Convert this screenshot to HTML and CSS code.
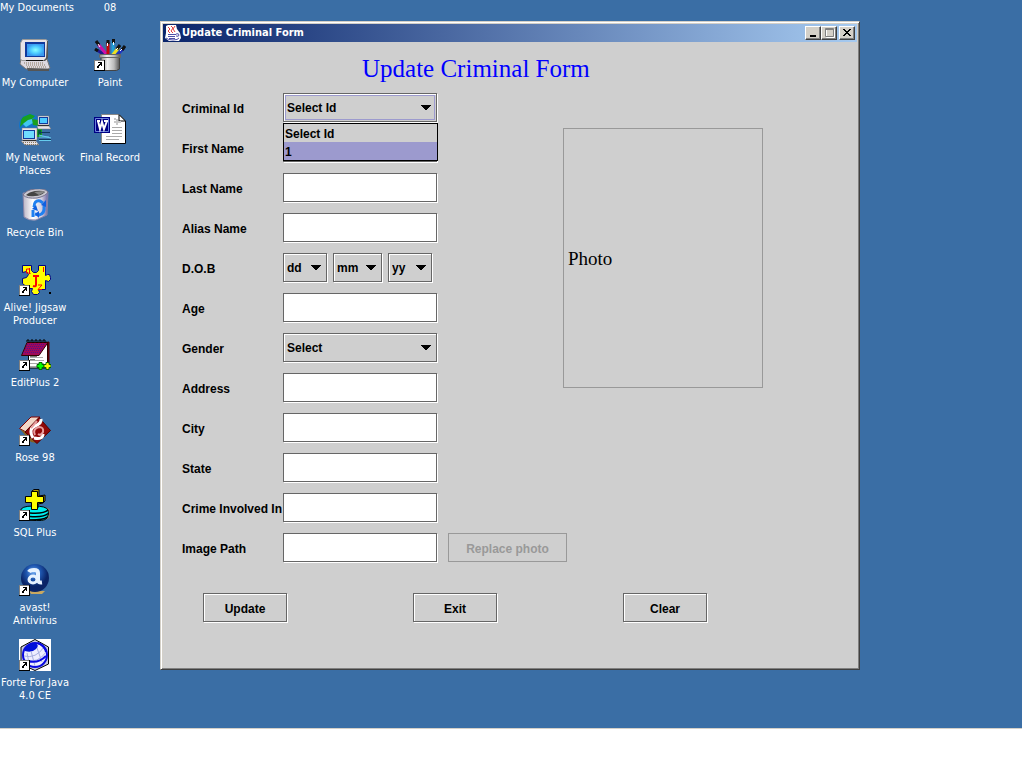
FILE: index.html
```html
<!DOCTYPE html>
<html lang="en">
<head>
<meta charset="utf-8">
<title>Update Criminal Form</title>
<link rel="stylesheet" href="styles.css">
</head>
<body>
<svg class="defs" aria-hidden="true">
  <defs>
    <symbol id="shortcut" viewBox="0 0 11 11">
      <path fill="#000" d="M0 0h11v11H0z"/><path fill="#fff" d="M0 0h10v10H0z"/><path fill="#808080" d="M0 0h10v1H1v9H0z"/>
      <path fill="#000" d="M4 2h4v4H7V5H6v1H5v2H3V6h1V5h1V4h1V3H4z"/>
    </symbol>
    <linearGradient id="metal"><stop offset="0" stop-color="#888"/><stop offset=".35" stop-color="#eee"/><stop offset=".7" stop-color="#bbb"/><stop offset="1" stop-color="#555"/></linearGradient>
    <linearGradient id="bin"><stop offset="0" stop-color="#b9b4c4"/><stop offset=".4" stop-color="#fff"/><stop offset=".75" stop-color="#d0cde0"/><stop offset="1" stop-color="#6a63a0"/></linearGradient>
    <radialGradient id="screen"><stop offset="0" stop-color="#8ff"/><stop offset=".6" stop-color="#4ccaff"/><stop offset="1" stop-color="#3a9af0"/></radialGradient>
    <radialGradient id="ball" cx=".45" cy=".3"><stop offset="0" stop-color="#6fa8f0"/><stop offset=".5" stop-color="#1f57b0"/><stop offset="1" stop-color="#0a2466"/></radialGradient>
    <symbol id="pc" viewBox="0 0 32 32">
      <path fill="#dcd8e0" stroke="#777" d="M2 20l-1 5 6 5h22l2-1-3-9z"/>
      <path fill="#555" d="M8 29l22 1v2H9z"/>
      <path stroke="#8a7a60" stroke-dasharray="1 1" d="M5 24h20M7 26h20M8 28h20"/>
      <path fill="#e8e4e8" stroke="#999" d="M3.500.5h23l2 1v17l-3 3h-23l-1-2V4z"/>
      <path fill="#555" d="M28 2h1v17l-3 3h-2l3-3z"/>
      <path fill="#123a9c" d="M6 3h20v15H6z"/><path fill="url(#screen)" d="M8 5h17v12H8z"/>
      <path fill="#111" d="M7 21h17v1H7z"/>
    </symbol>
  </defs>
</svg>
<main class="desktop">
  <nav class="icons" aria-label="Desktop">
    <div class="column">
      <button class="shortcut">My Documents</button>
      <button class="shortcut"><svg class="icon" aria-hidden="true"><use href="#pc"/></svg>My Computer</button>
      <button class="shortcut">
        <svg class="icon" viewBox="0 0 32 32" aria-hidden="true">
          <circle cx="11" cy="11" r="11" fill="#1474c8"/><path fill="#42c8f0" d="M5 3l8-1 1 7-7 4-4-4z"/>
          <path fill="#18a020" d="M4 3l7-3 5 2-3 3-4 1-4 3-4 4 1-7zM15 15h8v8h-6zM13 5l6 1 1 6-6-1z"/><path fill="#063" d="M19 16h3v5h-3z"/>
          <path stroke="#123a60" d="M20 18.500h11M20 25.500h12"/><path stroke="#6ce" d="M20 21l12 3M20 23h10M20 26.500h12"/>
          <path fill="#e8e4e8" stroke="#777" stroke-width=".5" d="M19 2h11v9H19zM18 12h12l2 3H19z"/>
          <path fill="#123a9c" d="M20 3h9v7h-9z"/><path fill="#4ccaff" d="M21 4h7v5h-7z"/><path stroke="#333" d="M19 11.500h11"/>
          <path fill="#e8e4e8" stroke="#777" stroke-width=".5" d="M3 14h15v12H3zM2 27h15l3 4H6z"/>
          <path fill="#123a9c" d="M4 16h12v9H4z"/><path fill="#6fdcff" d="M5 17h10v7H5z"/><path stroke="#333" d="M4 26.500h13"/><path stroke="#8a7a60" stroke-dasharray="1 1" d="M4 28.500h13M6 30.500h13"/>
        </svg>My Network<br>Places</button>
      <button class="shortcut">
        <svg class="icon" viewBox="0 0 32 32" aria-hidden="true">
          <path fill="url(#bin)" stroke="#8884a8" d="M4 4l1 24q5 4 12 3l11-5 1-23z"/>
          <path fill="#c9c7d0" stroke="#77738c" d="M4 6q3-5 12-6 10-1 13 3-2 4-11 6-10 1-14-3z"/>
          <path fill="#444" d="M7 6q3-3 9-4 7-1 10 1-4 4-10 4-6 1-9-1z"/><path fill="#888" d="M15 3l9-1 2 1-6 3z"/>
          <path fill="none" stroke="#2080f0" stroke-width="3" d="M15 18q0-7 6-6l3 2M14 21v7M25 17q1 8-5 9l-4-1"/>
          <path fill="#1060e0" d="M22 16l5-5v7zM13 20l4-4 2 6zM20 22v7l-4-4z"/>
        </svg>Recycle Bin</button>
      <button class="shortcut">
        <svg class="icon" viewBox="0 0 32 32" aria-hidden="true">
          <path fill="#ff0" stroke="#008" d="M3.500 1.500h9v5l2 2h3l2-2v-5h7v10l2-1h2l1 3v2l-2 2-3-1v9h-7l1 3-2 2h-4l-2-3 1-3h-4l-6-5v-5l4-1 2-3-2-3-4 1z"/>
          <g fill="none" stroke="#f00"><path d="M10.500 4v6l1-1M10 5H7.500v4h2M24.500 3v5M19 21h4l-4 4.500h4"/><path stroke-width="2" d="M14 12h6M17 12v9q0 2-3 1"/></g>
          <path fill="#000" d="M30 28h2v2h-2z"/><use href="#shortcut" y="21" width="11" height="11"/>
        </svg>Alive! Jigsaw<br>Producer</button>
      <button class="shortcut">
        <svg class="icon" viewBox="0 0 32 32" aria-hidden="true">
          <path fill="#fff" stroke="#000" d="M9.500 6l19-3v26h-19z"/><path fill="#800020" stroke="#500" d="M29 3h1v24h-1z"/>
          <path stroke="#aaa" d="M11 18.500h13M11 21.500h14M11 24.500h14M11 27.500h8"/><path stroke="#777" d="M11 17.500h7M11 20.500h5"/>
          <path fill="#a00858" stroke="#300" d="M8 3.500h21L20 16.500H2.500z"/><path stroke="#50108c" stroke-dasharray="1 1" d="M8 5.500h18M7 7.500h18M6 9.500h18M5 11.500h18M4 13.500h18"/>
          <path fill="none" stroke="#000" d="M8 3V1h2v3M12 3V1h2v3M16 3V1h2v3M20 3V1h2v3M24 3V1h2v3"/>
          <path fill="#0f0" stroke="#060" d="M20 23.500h3v2h2v3h-2v2h-3v-2h-2v-3h2z"/><path fill="#ff0" stroke="#060" d="M27 23.500h3v2h2v3h-2v2h-3v-2h-2v-3h2z"/>
          <use href="#shortcut" y="21" width="11" height="11"/>
        </svg>EditPlus 2</button>
      <button class="shortcut">
        <svg class="icon" viewBox="0 0 32 32" aria-hidden="true">
          <path fill="#f3d8c8" stroke="#800000" d="M.5 14.500L12 3h9L7 18z"/><path fill="#876020" d="M1 15l6 3 11 11-6-1z"/>
          <path fill="#900808" stroke="#500" d="M20 3.500l11.500 13L18 29.500 6 18z"/>
          <path fill="none" stroke="#fff" stroke-width="3" d="M14 24q-5-9 2-12 7-3 6-7M15 24q9 2 9-4"/><path fill="none" stroke="#e8a0a0" stroke-width="2" d="M16 21q-3-6 4-8 5 0 4 5-2 4-5 2M12 14l6-7"/>
          <use href="#shortcut" y="21" width="11" height="11"/>
        </svg>Rose 98</button>
      <button class="shortcut">
        <svg class="icon" viewBox="0 0 32 32" aria-hidden="true">
          <path fill="#777" d="M20 18q12 0 11 4v7l-8 3H12z"/>
          <path fill="#0ee" stroke="#000" d="M1.500 22q0-5 13-5t14.500 4-1 8-17 2z"/><path fill="none" stroke="#000" stroke-width="1.500" d="M11 24q14 1 18-3M11 27.500q14 1 18-3M11 31q14 0 17-3"/>
          <path fill="#b8a000" stroke="#000" d="M13 2l2-1.500h5V7l6-1v6l-2 2-5 1v4l-2 2z"/>
          <path fill="#ff0" stroke="#000" d="M12.500 2.500h6v5h6v6h-6v7h-6v-7h-6v-6h6z"/>
          <use href="#shortcut" y="21" width="11" height="11"/>
        </svg>SQL Plus</button>
      <button class="shortcut">
        <svg class="icon" viewBox="0 0 32 32" aria-hidden="true">
          <path fill="#c9a860" d="M10 27h16l-3 3H12z"/><circle cx="16" cy="14" r="14" fill="url(#ball)"/>
          <path fill="none" stroke="#e6f2ff" stroke-width="4" d="M10 8q1-2 5-2 4 0 4 3v7q0 3 4 2.500"/><ellipse cx="14" cy="15.500" rx="4" ry="3.500" fill="none" stroke="#e6f2ff" stroke-width="3"/>
          <use href="#shortcut" y="21" width="11" height="11"/>
        </svg>avast!<br>Antivirus</button>
      <button class="shortcut">
        <svg class="icon" viewBox="0 0 32 32" aria-hidden="true">
          <path fill="#fff" d="M0 0h32v32H0z"/><path fill="#c8c8dc" stroke="#000" d="M2 8l14-7.500L29.500 8v17L16 31.500 2 25z"/>
          <circle cx="16" cy="16" r="12" fill="#eef" stroke="#0808e0" stroke-width="2"/>
          <path fill="#0010d8" d="M6 10q3-6 10-6 5 2 1 6-4 4-11 2z"/><path fill="none" stroke="#a8b0e0" d="M5 17q12 3 20-9M6 21q13 4 21-8M12 12l4 15M18 9l5 14M8 14l2 10"/>
          <path fill="none" stroke="#0808e0" stroke-width="2" d="M9 22q10 3 18-5M19 4q7 3 8 9"/>
          <use href="#shortcut" y="21" width="11" height="11"/>
        </svg>Forte For Java<br>4.0 CE</button>
    </div>
    <div class="column">
      <button class="shortcut">08</button>
      <button class="shortcut">
        <svg class="icon" viewBox="0 0 32 32" aria-hidden="true">
          <g stroke-width="3"><path stroke="#201890" d="M3 11l11 7"/><path stroke="#d010a8" d="M4 5l9 11"/><path stroke="#c80808" d="M14 3v14"/><path stroke="#20a0d8" d="M19 2v14"/><path stroke="#f0e020" d="M25 8l-7 9"/><path stroke="#2030c0" d="M30 9l-8 8"/></g>
          <g stroke="#111" stroke-width="3"><path d="M1 10l3 2M2 2l3 4M14 1v4M19.500 0v4M26 6l-3 4M31 7l-3 4"/></g>
          <path stroke="#fff" d="M4 5l2 3M13.500 4v3M19.500 3v3M24 9l-2 2M28 10l-2 2"/>
          <path fill="url(#metal)" stroke="#444" d="M7 18h18.500v12l-3 1.500h-13L7 30z"/><path fill="url(#metal)" stroke="#666" d="M5.500 15.500h21v3h-21z"/>
          <use href="#shortcut" y="21" width="11" height="11"/>
        </svg>Paint</button>
      <button class="shortcut">
        <svg class="icon" viewBox="0 0 32 32" aria-hidden="true">
          <path fill="#fff" stroke="#888" d="M7.500.5H25l6.500 6.500v22.500h-24z"/><path fill="none" stroke="#000" d="M25 .5l6.500 6.500v22.500H8M25 1v6h6"/>
          <path stroke="#aaa" d="M18 13.500h10M18 16.500h10M18 19.500h10M12 22.500h16M12 25.500h13"/><path stroke="#c8c8c8" stroke-width="2" d="M20 8h7M23 5v6M20 5h2"/>
          <path fill="#000084" d="M0 3h16v16H0z"/><path fill="none" stroke="#6a82d8" d="M1.500 4.500h13v13h-13z"/>
          <path fill="none" stroke="#fff" stroke-width="2" d="M3 7h3M10 7h4M4 7l2 8 2-7 2 7 3-8"/>
        </svg>Final Record</button>
    </div>
  </nav>

  <section class="window" aria-labelledby="caption">
    <header class="titlebar">
      <svg class="app" viewBox="0 0 16 16" aria-hidden="true">
        <path fill="#fff" d="M1 1l2-1h8l1 4 3 4 1 5-2 3H4l-4-3 1-5z"/><path fill="none" stroke="#e04040" stroke-width="1" d="M3 2l2 2-2 2 2 2M6 1l2 2-2 3 2 2M10 1L8 4l2 3"/>
        <path fill="none" stroke="#5050a8" d="M3 9.500h8M11 9q3-1 3 1t-3 1M3 11.500h7M4 13.500h6M1 13q2 2 7 2t6-2"/>
      </svg>
      <span class="caption" id="caption">Update Criminal Form</span>
      <button class="sys" aria-label="Minimize"><svg viewBox="0 0 12 10"><path d="M3 7h6v2H3z"/></svg></button>
      <button class="sys" aria-label="Maximize" disabled><svg viewBox="0 0 12 10"><path fill="none" stroke="#fff" d="M3.500 1.500h8v8h-8z"/><path fill="none" stroke="#808080" d="M2.500.5h8v8h-8zM2 1.500h9"/></svg></button>
      <button class="sys close" aria-label="Close"><svg viewBox="0 0 12 10"><path d="M2 1h2v1h1v1h2V2h1V1h2v1H9v1H8v1H7v1h1v1h1v1h1v1H8V7H7V6H5v1H4v1H2V7h1V6h1V5h1V4H4V3H3V2H2z"/></svg></button>
    </header>
    <form class="client">
      <h1>Update Criminal Form</h1>
      <div class="fields">
        <label for="cid">Criminal Id</label>
        <div class="combo">
          <select id="cid" class="box focused"><option>Select Id</option><option>1</option></select>
          <ul class="popup" role="listbox" aria-label="Criminal Id">
            <li role="option" aria-selected="false">Select Id</li>
            <li role="option" aria-selected="true">1</li>
          </ul>
        </div>
        <label for="first">First Name</label><input id="first" class="box" type="text">
        <label for="last">Last Name</label><input id="last" class="box" type="text">
        <label for="alias">Alias Name</label><input id="alias" class="box" type="text">
        <label for="dd">D.O.B</label>
        <div class="dob">
          <select id="dd" class="box day"><option>dd</option></select>
          <select class="box month" aria-label="Month"><option>mm</option></select>
          <select class="box day" aria-label="Year"><option>yy</option></select>
        </div>
        <label for="age">Age</label><input id="age" class="box" type="text">
        <label for="gender">Gender</label><select id="gender" class="box"><option>Select</option></select>
        <label for="address">Address</label><input id="address" class="box" type="text">
        <label for="city">City</label><input id="city" class="box" type="text">
        <label for="state">State</label><input id="state" class="box" type="text">
        <label for="crime">Crime Involved In</label><input id="crime" class="box" type="text">
        <label for="path">Image Path</label><input id="path" class="box" type="text">
        <button class="box replace" type="button" disabled>Replace photo</button>
        <div class="photo">Photo</div>
      </div>
      <div class="actions">
        <button class="box action" type="button">Update</button>
        <button class="box action" type="button">Exit</button>
        <button class="box action" type="button">Clear</button>
      </div>
    </form>
  </section>
</main>
</body>
</html>
```
FILE: styles.css
```css
* { box-sizing: border-box; }

body {
  margin: 0;
  background: #fff;
  font: bold 12px/16px "Liberation Sans", Arial, sans-serif;
  color: #000;
}

button, input, select { margin: 0; font: inherit; color: inherit; }

.defs { position: absolute; width: 0; height: 0; }

.desktop {
  display: flex;
  align-items: flex-start;
  gap: 15px;
  min-height: calc(100vh - 39px);
  margin-right: 2px;
  background: #3a6ea5;
  border-bottom: 1px solid #d4d0c8;
}

/* Desktop shortcuts */
.icons { display: flex; gap: 5px; flex: none; }

.column {
  display: grid;
  grid-template-columns: 100%;
  grid-template-rows: 38px;
  grid-auto-rows: 75px;
  width: 70px;
}

.shortcut {
  display: flow-root;
  align-self: start;
  padding: 1px 0 0;
  border: 0;
  background: none;
  color: #fff;
  font: 11px/13px Tahoma, "DejaVu Sans Condensed", sans-serif;
  text-align: center;
  white-space: nowrap;
}

.icon { display: block; width: 32px; height: 32px; margin: 0 auto 5px; }

/* Window frame */
.window {
  flex: 0 1 700px;
  margin-top: 21px;
  padding: 1px;
  background: #d4d0c8;
  border: 1px solid;
  border-color: #d4d0c8 #404040 #404040 #d4d0c8;
  box-shadow: inset 1px 1px 0 #fff, inset -1px -1px 0 #808080;
}

.titlebar {
  display: flex;
  align-items: center;
  height: 18px;
  margin: 1px 1px 0;
  padding: 0 2px;
  background: linear-gradient(90deg, #0a246a, #a6caf0);
}

.app { width: 16px; height: 16px; margin-right: 1px; }

.caption {
  flex: 1;
  color: #fff;
  font: bold 11px/18px Tahoma, "DejaVu Sans Condensed", sans-serif;
}

.sys {
  width: 16px;
  height: 14px;
  padding: 0 0 0 1px;
  border: 1px solid;
  border-color: #fff #404040 #404040 #fff;
  box-shadow: inset -1px -1px 0 #808080;
  background: #d4d0c8;
}

.sys svg { display: block; width: 12px; height: 10px; }
.close { margin-left: 2px; }

/* Form */
.client { margin: 0 0 0 1px; padding: 0 19px 46px; background: #cfcfcf; }

h1 {
  margin: 0;
  padding: 3px 0 0 180px;
  color: #00f;
  font: 25px/48px "Liberation Serif", "Times New Roman", serif;
}

.fields {
  display: grid;
  grid-template-columns: 101px 154px 11px 115px 200px;
  grid-auto-rows: 40px;
}

label { grid-column: 1; line-height: 32px; white-space: nowrap; }

.box {
  width: 100%;
  height: 29px;
  padding: 0 3px;
  border: 1px solid #666;
  border-radius: 0;
  background: #fff;
  box-shadow: inset 1px 1px 0 #fff, 1px 1px 0 #fff;
  outline: 0;
}

.fields > .box, .combo, .dob { grid-column: 2; }

select.box {
  appearance: none;
  background: #cfcfcf url('data:image/svg+xml,<svg xmlns="http://www.w3.org/2000/svg" width="10" height="5"><path d="M0 0h10v1H9v1H8v1H7v1H6v1H4V4H3V3H2V2H1V1H0z"/></svg>') no-repeat right 5px center;
}

select.focused { outline: 1px solid #9c9ace; outline-offset: -3px; }

.combo { position: relative; }

.popup {
  position: absolute;
  z-index: 1;
  top: 30px;
  left: 0;
  width: 155px;
  margin: 0;
  padding: 0;
  border: 1px solid #000;
  background: #cfcfcf;
  list-style: none;
  line-height: 18px;
}

.popup li { height: 18px; padding-left: 1px; line-height: 20px; }
.popup [aria-selected="true"] { background: #9c9ace; }

.dob { display: flex; gap: 6px; }
.day { width: 44px; }
.month { width: 49px; }

button.box { padding-top: 2px; background: #cfcfcf; }

.fields > .replace {
  grid-column: 4 / 6;
  grid-row: 12;
  width: 119px;
  border-color: #999;
  box-shadow: none;
  color: #999;
}

.photo {
  grid-column: 5;
  grid-row: 1 / 9;
  display: flex;
  align-items: center;
  height: 260px;
  margin-top: 35px;
  padding: 2px 0 0 4px;
  border: 1px solid #999;
  font: 19px/22px "Liberation Serif", "Times New Roman", serif;
}

.actions { display: flex; gap: 126px; margin: 20px 0 0 21px; }
.actions .action { width: 84px; }
```
